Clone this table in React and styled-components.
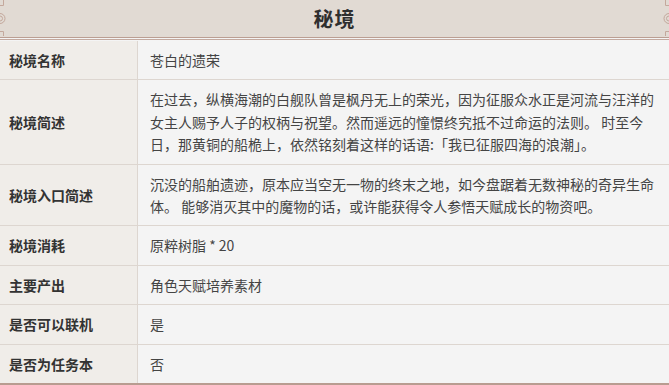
import React from 'react';
import styled, { createGlobalStyle } from 'styled-components';

const GlobalStyle = createGlobalStyle`
  html, body {
    margin: 0;
    padding: 0;
    background: #f4f4f4;
  }
  body {
    font-family: "Noto Sans CJK SC", "Noto Sans", sans-serif;
  }
`;

// Page frame
const Wrapper = styled.div`
  width: 669px;
  background: #f4f4f4;
  border-bottom: 2px solid #b89c90;
`;

const Header = styled.div`
  position: relative;
  height: 37px;
  background: #e1dad3;
  border-bottom: 1px solid #bb9e92;
  display: flex;
  align-items: center;
  justify-content: center;
  &::after {
    content: '';
    position: absolute;
    left: 0;
    right: 0;
    bottom: -3px;
    height: 1px;
    background: #c3a99e;
  }
`;

const Title = styled.h2`
  margin: 0;
  font-size: 20px;
  font-weight: 700;
  color: #2f2f2f;
  letter-spacing: 1px;
  line-height: 1;
`;

const Ornament = styled.svg`
  position: absolute;
  top: 0;
  ${(p) => (p.$right ? 'right: 0; transform: scaleX(-1);' : 'left: 0;')}
`;

const Table = styled.div`
  display: grid;
  grid-template-columns: 138px 1fr;
  margin-top: 3px;
`;

const Label = styled.div`
  background: #f0ede9;
  border-right: 1px solid #ddd6d0;
  border-bottom: ${(p) => (p.$last ? 'none' : '1px solid #ddd6d0')};
  padding: 8px 9px;
  display: flex;
  align-items: center;
  font-size: 14px;
  line-height: 22.4px;
  font-weight: 700;
  color: #333;
`;

const Value = styled.div`
  background: #f4f4f4;
  border-bottom: ${(p) => (p.$last ? 'none' : '1px solid #ddd6d0')};
  padding: 8px 12px;
  font-size: 14px;
  line-height: 22.4px;
  color: #444;
`;

const Corner = ({ right }) => (
  <Ornament $right={right} width="8" height="38" viewBox="0 0 8 38">
    <g fill="none" stroke="#c4a89c" strokeWidth="1">
      <path d="M0 5.5H3.5V0" />
      <circle cx="0" cy="18.5" r="5" />
      <circle cx="0" cy="18.5" r="2.5" />
      <path d="M0 31.5H3.5V36" />
    </g>
  </Ornament>
);

const rows = [
  ['秘境名称', '苍白的遗荣'],
  [
    '秘境简述',
    '在过去，纵横海潮的白舰队曾是枫丹无上的荣光，因为征服众水正是河流与汪洋的女主人赐予人子的权柄与祝望。然而遥远的憧憬终究抵不过命运的法则。 时至今日，那黄铜的船桅上，依然铭刻着这样的话语:「我已征服四海的浪潮」。',
  ],
  [
    '秘境入口简述',
    '沉没的船舶遗迹，原本应当空无一物的终末之地，如今盘踞着无数神秘的奇异生命体。 能够消灭其中的魔物的话，或许能获得令人参悟天赋成长的物资吧。',
  ],
  ['秘境消耗', '原粹树脂 * 20'],
  ['主要产出', '角色天赋培养素材'],
  ['是否可以联机', '是'],
  ['是否为任务本', '否'],
];

const App = () => {
  return (
    <Wrapper>
      <GlobalStyle />
      <Header>
        <Corner />
        <Title>秘境</Title>
        <Corner right />
      </Header>
      <Table>
        {rows.map(([k, v], i) => {
          const last = i === rows.length - 1;
          return (
            <React.Fragment key={k}>
              <Label $last={last}>{k}</Label>
              <Value $last={last}>{v}</Value>
            </React.Fragment>
          );
        })}
      </Table>
    </Wrapper>
  );
};

export default App;
